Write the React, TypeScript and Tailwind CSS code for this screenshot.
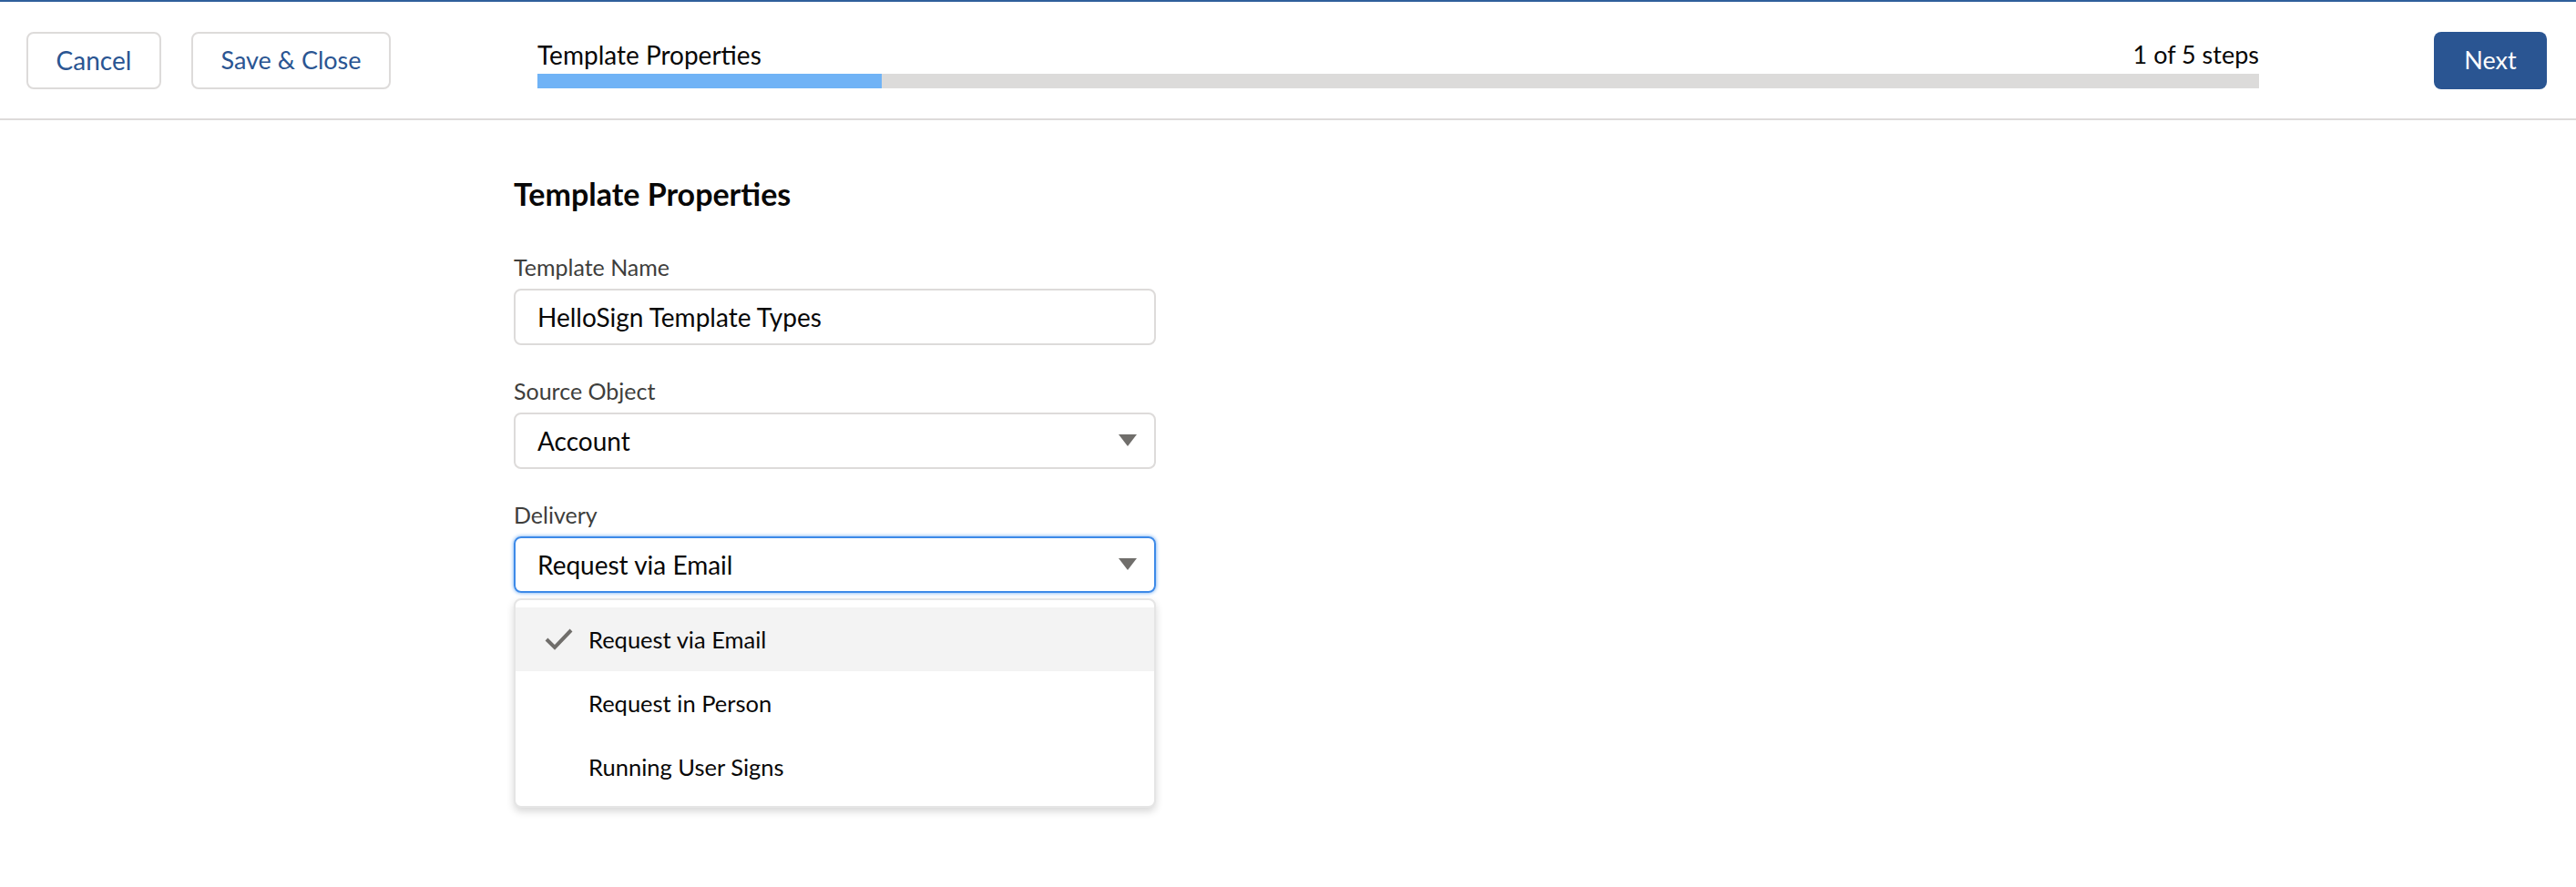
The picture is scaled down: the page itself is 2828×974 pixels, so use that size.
const deliveryOptions = ['Request via Email', 'Request in Person', 'Running User Signs'];

function Caret() {
  return (
    <svg width="20" height="14" viewBox="0 0 20 14" className="shrink-0">
      <path d="M0 0H20L10 13Z" fill="#706e6b" />
    </svg>
  );
}

function Field({ label, children }: { label: string; children: React.ReactNode }) {
  return (
    <div className="flex flex-col gap-[8px]">
      <label className="text-[25px] leading-[32px] text-[#3e3e3c]">{label}</label>
      {children}
    </div>
  );
}

export default function App() {
  return (
    <div className="w-full min-h-[974px] bg-white text-[#080707]" style={{ fontFamily: 'Lato, "Open Sans", sans-serif' }}>
      {/* top brand strip */}
      <div className="h-[2px] bg-[#2f5f9b]" />

      {/* Header */}
      <header className="h-[130px] flex items-center pl-[29px] pr-[32px] border-b-2 border-[#dddbda]">
        <button className="w-[148px] h-[63px] rounded-[8px] border-2 border-[#dddbda] bg-white text-[28px] text-[#2a5592]">
          Cancel
        </button>
        <button className="ml-[33px] w-[219px] h-[63px] rounded-[8px] border-2 border-[#dddbda] bg-white text-[27px] text-[#2a5592]">
          Save &amp; Close
        </button>

        <div className="ml-[161px] mr-[192px] flex-1 flex flex-col gap-[5px] pt-[8px]">
          <div className="flex justify-between text-[27px] leading-[32px]">
            <span className="text-[28px]">Template Properties</span>
            <span>1 of 5 steps</span>
          </div>
          <div className="h-[16px] bg-[#dcdbda]">
            <div className="h-full w-[20%] bg-[#70b3f6]" />
          </div>
        </div>

        <button className="w-[124px] h-[63px] rounded-[8px] bg-[#2a5592] text-white text-[27px]">Next</button>
      </header>

      {/* Form */}
      <main className="pl-[564px] pt-[60px]">
        <div className="w-[705px] flex flex-col">
          <h1 className="text-[34px] leading-[42px] font-bold mb-[43px]">Template Properties</h1>

          <div className="flex flex-col gap-[34px]">
            <Field label="Template Name">
              <div className="h-[62px] rounded-[8px] border-2 border-[#dddbda] flex items-center pl-[24px] text-[28px]">
                HelloSign Template Types
              </div>
            </Field>

            <Field label="Source Object">
              <div className="h-[62px] rounded-[8px] border-2 border-[#dddbda] flex items-center justify-between pl-[24px] pr-[19px] text-[28px]">
                <span>Account</span>
                <Caret />
              </div>
            </Field>

            <Field label="Delivery">
              <div className="relative">
                <div className="h-[62px] rounded-[8px] border-2 border-[#3d8ae8] shadow-[0_0_4px_#62a4f2] flex items-center justify-between pl-[24px] pr-[19px] text-[28px]">
                  <span>Request via Email</span>
                  <Caret />
                </div>

                <ul className="absolute left-0 right-0 top-[68px] py-[8px] rounded-[8px] border-2 border-[#e5e5e5] bg-white shadow-[0_4px_8px_rgba(0,0,0,0.16)]">
                  {deliveryOptions.map((opt, i) => (
                    <li
                      key={opt}
                      className={`h-[70px] flex items-center pl-[32px] text-[25.5px] ${i === 0 ? 'bg-[#f3f3f3]' : ''}`}
                    >
                      <span className="w-[48px] shrink-0">
                        {i === 0 && (
                          <svg width="31" height="24" viewBox="0 0 31 24">
                            <path d="M2 12L11 21L29 2" fill="none" stroke="#706e6b" strokeWidth="4" />
                          </svg>
                        )}
                      </span>
                      {opt}
                    </li>
                  ))}
                </ul>
              </div>
            </Field>
          </div>
        </div>
      </main>
    </div>
  );
}
